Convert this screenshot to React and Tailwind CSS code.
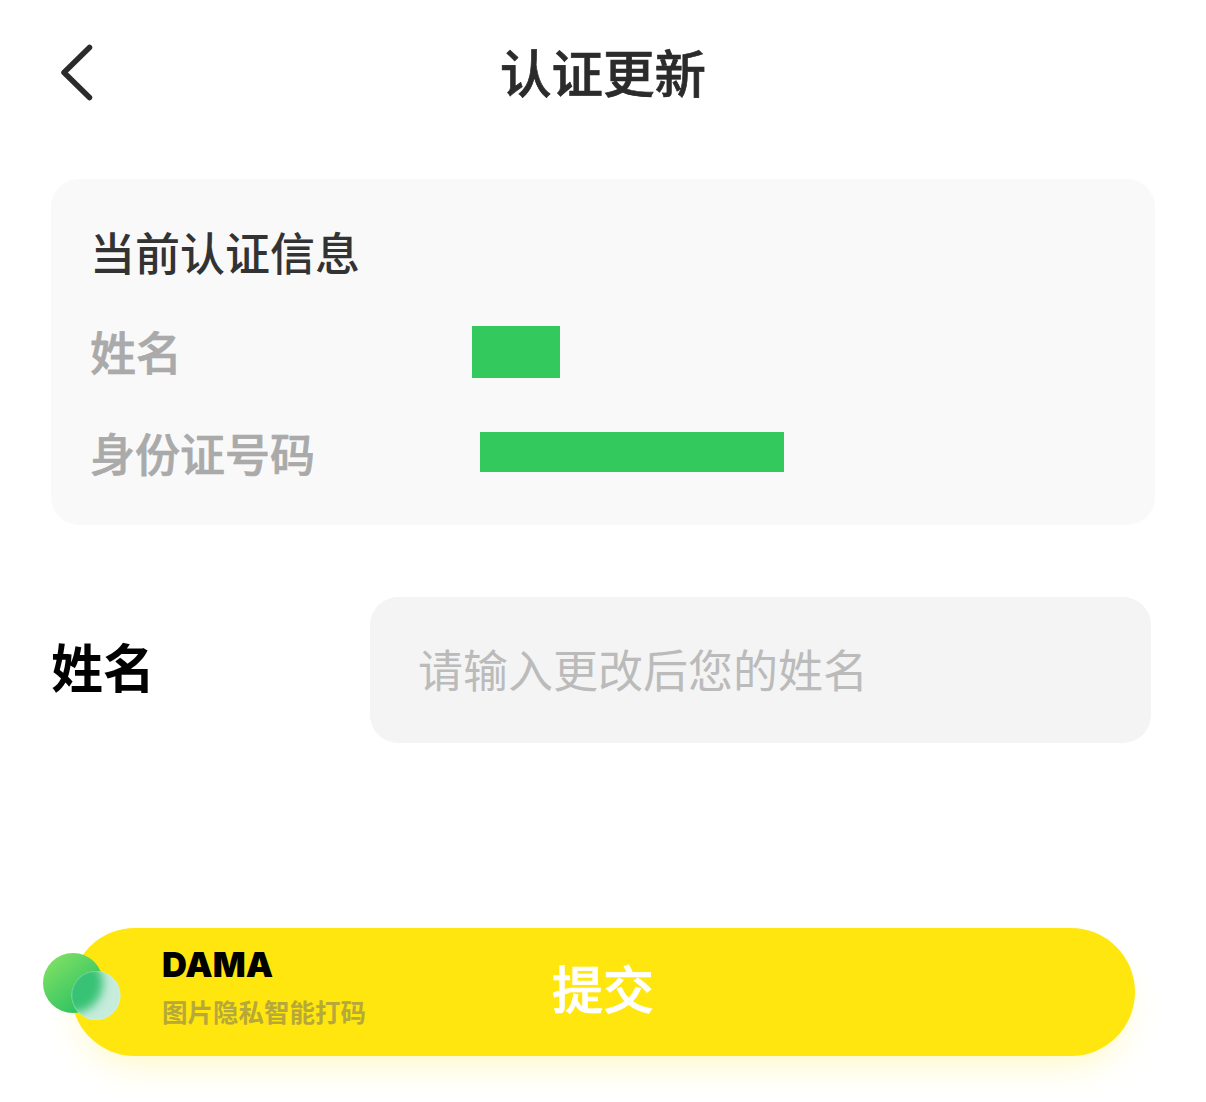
const FONT = '"Noto Sans CJK SC", "Noto Sans", sans-serif';

function DamaLogo() {
  return (
    <svg className="absolute left-[-30px] top-[23px]" width="82" height="72" viewBox="0 0 82 72" fill="none">
      <defs>
        <linearGradient id="bigDot" x1="0.1" y1="0.1" x2="0.8" y2="0.95">
          <stop offset="0" stopColor="#7fe063" />
          <stop offset="1" stopColor="#25bf63" />
        </linearGradient>
        <clipPath id="smallClip">
          <circle cx="55" cy="44.5" r="24.5" />
        </clipPath>
        <filter id="soft" x="-30%" y="-30%" width="160%" height="160%">
          <feGaussianBlur stdDeviation="5" />
        </filter>
      </defs>
      <circle cx="32" cy="32" r="30" fill="url(#bigDot)" />
      <circle cx="55" cy="44.5" r="24.5" fill="#c6ecdc" />
      <g clipPath="url(#smallClip)">
        <circle cx="32" cy="32" r="30" fill="#38c274" filter="url(#soft)" />
      </g>
      <circle cx="55" cy="44.5" r="24" stroke="#ffffff" strokeOpacity="0.18" />
    </svg>
  );
}

function App() {
  return (
    <div className="flex h-[1102px] w-[1206px] flex-col overflow-hidden bg-white" style={{ fontFamily: FONT }}>
      <header className="relative flex h-[146px] shrink-0 items-start justify-center pt-[35px]">
        <svg className="absolute left-[56px] top-[40px]" width="44" height="66" viewBox="0 0 44 66" fill="none">
          <path d="M33.5 7.5L8 32.5L33.5 57.5" stroke="#2b2b2b" strokeWidth="5.5" strokeLinecap="round" strokeLinejoin="round" />
        </svg>
        <h1 className="text-[51.5px] font-medium leading-[72px] text-[#2b2b2b] [-webkit-text-stroke:0.7px_#2b2b2b]">认证更新</h1>
      </header>

      <section className="mx-[51px] mt-[33px] h-[346px] w-[1104px] shrink-0 rounded-[28px] bg-[#f9f9f9] pl-[39px] pt-[42px]">
        <h2 className="text-[45px] font-medium leading-[62px] text-[#333333]">当前认证信息</h2>
        <div className="mt-[36px] flex h-[103px] items-start">
          <span className="w-[382px] text-[46px] font-medium leading-[62px] text-[#aaaaaa] [-webkit-text-stroke:0.7px_#aaaaaa]">姓名</span>
          <div className="mt-[7px] h-[52px] w-[88px] bg-[#34c95c]" />
        </div>
        <div className="flex items-start">
          <span className="w-[390px] text-[45px] font-medium leading-[62px] text-[#aaaaaa] [-webkit-text-stroke:0.7px_#aaaaaa]">身份证号码</span>
          <div className="mt-[10px] h-[40px] w-[304px] bg-[#34c95c]" />
        </div>
      </section>

      <section className="mt-[72px] flex items-center pl-[51px]">
        <label className="mt-[-8px] w-[319px] text-[52px] font-bold leading-[72px] text-black">姓名</label>
        <div className="flex h-[146px] w-[781px] items-center rounded-[28px] bg-[#f4f4f4] pb-[2px] pl-[48px] text-[45px] leading-[62px] text-[#bbbbbb]">
          请输入更改后您的姓名
        </div>
      </section>

      <div className="relative ml-[71px] mt-[185px] flex h-[128px] w-[1064px] items-center justify-center rounded-full bg-[#ffe60f] pb-[10px] shadow-[0_18px_36px_-12px_rgba(255,230,15,0.28)]">
        <span className="text-[51px] font-medium leading-[72px] text-white [-webkit-text-stroke:0.7px_#ffffff]">提交</span>
        <DamaLogo />
        <div className="absolute left-[91px] top-[15px]">
          <div className="text-[34.5px] leading-[44px] font-black text-black" style={{ fontFamily: 'Inter, sans-serif' }}>DAMA</div>
          <div className="mt-[7px] text-[25.5px] font-bold leading-[34px] text-[#b7a83a]">图片隐私智能打码</div>
        </div>
      </div>
    </div>
  );
}

export default App;
